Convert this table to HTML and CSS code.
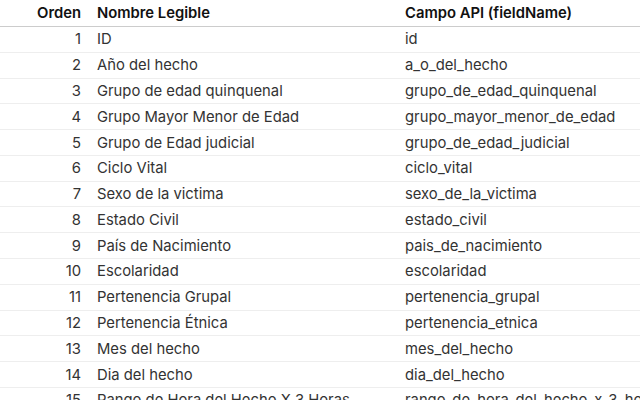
FILE: index.html
```html
<!DOCTYPE html>
<html lang="es">
<head>
<meta charset="utf-8">
<title>Campos</title>
<link rel="stylesheet" href="styles.css">
</head>
<body>
<div class="wrap">
<table class="fields">
  <colgroup><col class="c-orden"><col class="c-nombre"><col class="c-campo"></colgroup>
  <thead>
    <tr><th class="num">Orden</th><th>Nombre Legible</th><th>Campo API (fieldName)</th></tr>
  </thead>
  <tbody>
    <tr><td class="num">1</td><td>ID</td><td>id</td></tr>
    <tr><td class="num">2</td><td>Año del hecho</td><td>a_o_del_hecho</td></tr>
    <tr><td class="num">3</td><td>Grupo de edad quinquenal</td><td>grupo_de_edad_quinquenal</td></tr>
    <tr><td class="num">4</td><td>Grupo Mayor Menor de Edad</td><td>grupo_mayor_menor_de_edad</td></tr>
    <tr><td class="num">5</td><td>Grupo de Edad judicial</td><td>grupo_de_edad_judicial</td></tr>
    <tr><td class="num">6</td><td>Ciclo Vital</td><td>ciclo_vital</td></tr>
    <tr><td class="num">7</td><td>Sexo de la victima</td><td>sexo_de_la_victima</td></tr>
    <tr><td class="num">8</td><td>Estado Civil</td><td>estado_civil</td></tr>
    <tr><td class="num">9</td><td>País de Nacimiento</td><td>pais_de_nacimiento</td></tr>
    <tr><td class="num">10</td><td>Escolaridad</td><td>escolaridad</td></tr>
    <tr><td class="num">11</td><td>Pertenencia Grupal</td><td>pertenencia_grupal</td></tr>
    <tr><td class="num">12</td><td>Pertenencia Étnica</td><td>pertenencia_etnica</td></tr>
    <tr><td class="num">13</td><td>Mes del hecho</td><td>mes_del_hecho</td></tr>
    <tr><td class="num">14</td><td>Dia del hecho</td><td>dia_del_hecho</td></tr>
    <tr><td class="num">15</td><td>Rango de Hora del Hecho X 3 Horas</td><td>rango_de_hora_del_hecho_x_3_horas</td></tr>
  </tbody>
</table>
</div>
</body>
</html>
```
FILE: styles.css
```css
html, body {
  margin: 0;
  padding: 0;
  background: #fff;
  overflow: hidden;
}
.wrap {
  width: 640px;
  overflow: hidden;
}
.fields {
  border-collapse: collapse;
  table-layout: fixed;
  width: 720px;
  font-family: Inter, "Noto Sans", sans-serif;
  font-size: 14.8px;
  color: #333;
}
.c-orden { width: 89px; }
.c-nombre { width: 308px; }
.c-campo { width: 323px; }
.fields th, .fields td {
  padding: 3.4px 8px;
  line-height: 18px;
  text-align: left;
  white-space: nowrap;
}
.fields th {
  padding-top: 4px;
  padding-bottom: 4px;
  font-weight: 600;
  color: #111;
  border-bottom: 1px solid #ccc;
}
.fields td {
  border-bottom: 1px solid #eee;
}
.fields .num {
  text-align: right;
}
```
